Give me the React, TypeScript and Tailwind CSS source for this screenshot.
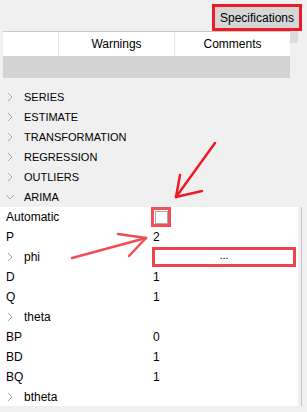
function Chevron({ open = false }: { open?: boolean }) {
  return open ? (
    <svg width="10" height="10" viewBox="0 0 10 10" className="shrink-0">
      <path d="M1 3 L5 7 L9 3" fill="none" stroke="#a8a8a8" strokeWidth="1" />
    </svg>
  ) : (
    <svg width="10" height="10" viewBox="0 0 10 10" className="shrink-0">
      <path d="M3 1 L7 5 L3 9" fill="none" stroke="#a8a8a8" strokeWidth="1" />
    </svg>
  );
}

function TreeRow({ label, open }: { label: string; open?: boolean }) {
  return (
    <div className="h-[20px] flex items-center pl-[5px] gap-[9px]">
      <Chevron open={open} />
      <span className="text-[11px]">{label}</span>
    </div>
  );
}

function PropRow({ label, value, expand }: { label: string; value?: React.ReactNode; expand?: boolean }) {
  return (
    <div className="h-[20px] flex items-center">
      <div className="w-[151px] flex items-center">
        {expand ? (
          <div className="flex items-center pl-[5px] gap-[9px]">
            <Chevron />
            <span>{label}</span>
          </div>
        ) : (
          <span className="pl-[6px]">{label}</span>
        )}
      </div>
      <div className="flex-1 flex items-center">{value}</div>
    </div>
  );
}

export default function App() {
  return (
    <div className="w-[307px] h-[412px] bg-[#f0f0f0] relative overflow-hidden font-['Liberation_Sans',sans-serif] text-[12px] text-black">
      {/* top bar */}
      <div className="h-[31px] flex justify-end items-start pt-[4px] pr-[5px]">
        <div className="border-[3px] border-[#ed1c24] h-[27px]">
          <div className="bg-[#d6d6d6] h-full px-[5px] flex items-center">Specifications</div>
        </div>
      </div>

      {/* grid header */}
      <div className="flex">
        <div className="ml-[3px] w-[287px]">
          <div className="h-[25px] border-t border-[#c8c8c8] bg-white flex">
            <div className="w-[56px] border-r border-[#e3e3e3]" />
            <div className="w-[116px] border-r border-[#e3e3e3] flex items-center justify-center">Warnings</div>
            <div className="flex-1 flex items-center justify-center">Comments</div>
          </div>
          <div className="h-[22px] bg-[#d3d3d3]" />
        </div>
        <div className="w-[8px] h-[12px] bg-[#dcdcdc]" />
      </div>

      {/* tree */}
      <div className="mt-[9px]">
        <TreeRow label="SERIES" />
        <TreeRow label="ESTIMATE" />
        <TreeRow label="TRANSFORMATION" />
        <TreeRow label="REGRESSION" />
        <TreeRow label="OUTLIERS" />
        <TreeRow label="ARIMA" open />
      </div>

      <div className="flex">
        <div className="w-[298px] h-[199px] bg-white overflow-hidden">
          <PropRow
            label="Automatic"
            value={
              <div className="w-[20px] h-[20px] border-[3px] border-[#f0505a] flex items-center justify-center">
                <div className="w-[13px] h-[13px] border border-[#a9a9a9] bg-white" />
              </div>
            }
          />
          <PropRow label="P" value={<span className="pl-[2px]">2</span>} />
          <PropRow
            label="phi"
            expand
            value={
              <div className="w-[144px] h-[20px] ml-[1px] border-[3px] border-[#e9474f] flex items-center justify-center text-[11px] leading-none pb-[3px]">
                ...
              </div>
            }
          />
          <PropRow label="D" value={<span className="pl-[2px]">1</span>} />
          <PropRow label="Q" value={<span className="pl-[2px]">1</span>} />
          <PropRow label="theta" expand />
          <PropRow label="BP" value={<span className="pl-[2px]">0</span>} />
          <PropRow label="BD" value={<span className="pl-[2px]">1</span>} />
          <PropRow label="BQ" value={<span className="pl-[2px]">1</span>} />
          <PropRow label="btheta" expand />
        </div>
        <div className="ml-[3px] w-px h-[199px] bg-[#c4c4c4]" />
      </div>

      {/* annotation arrows */}
      <svg className="absolute inset-0 pointer-events-none" width="307" height="412" viewBox="0 0 307 412">
        <g stroke="#ed1c24" strokeWidth="2.5" strokeLinecap="round" fill="none">
          <path d="M215 143 L176 197" />
          <path d="M176 197 L180 175" />
          <path d="M176 197 L202 191" />
        </g>
        <g stroke="#f04e57" strokeWidth="2.5" strokeLinecap="round" fill="none">
          <path d="M72 258 L146 238" />
          <path d="M146 238 L118 234" />
          <path d="M146 238 L129 256" />
        </g>
      </svg>
    </div>
  );
}
